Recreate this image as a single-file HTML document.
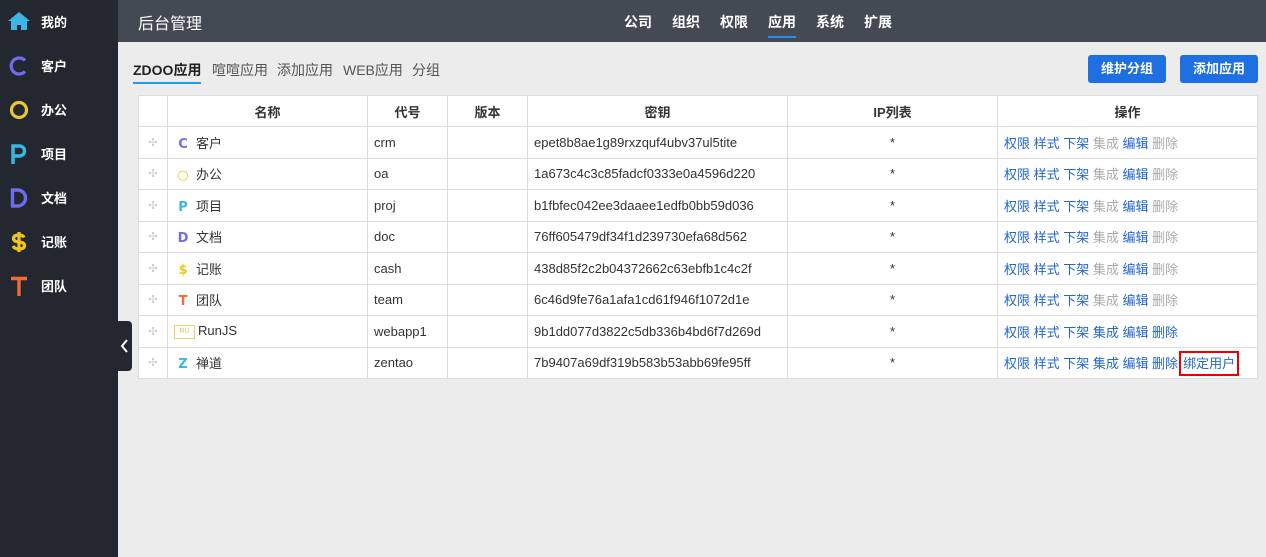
<!DOCTYPE html>
<html><head><meta charset="utf-8"><style>
*{margin:0;padding:0;box-sizing:border-box}
body{width:1266px;height:557px;background:#ececec;font-family:"Liberation Sans","Noto Sans CJK SC",sans-serif;font-size:13px;color:#333;position:relative;overflow:hidden}
#side{position:absolute;left:0;top:0;width:118px;height:557px;background:#23272f}
.si{position:absolute;left:0;height:44px;width:118px;color:#fff;font-weight:bold;font-size:13px}
.si svg{position:absolute;left:8px;top:11px}
.si .t{position:absolute;left:41px;top:12px}
#hd{position:absolute;left:118px;top:0;width:1148px;height:42px;background:#434a54;color:#fff}
#hd .ttl{position:absolute;left:20px;top:10px;font-size:16px}
#hd .nav{position:absolute;top:12px;font-weight:bold;font-size:14px}
#hd .act{border-bottom:2px solid #2a8ce6;padding-bottom:4px}
.tab{position:absolute;top:60px;font-size:14px;color:#555}
.btn{position:absolute;top:55px;height:28px;background:#1e6fe0;color:#fff;border-radius:3px;font-weight:bold;font-size:13px;line-height:28px;text-align:center}
table{position:absolute;left:138px;top:95px;border-collapse:collapse;background:#fff;table-layout:fixed}
td,th{border:1px solid #ddd;height:31.5px;padding:0 6px;white-space:nowrap;font-size:13px}
th{height:31px;font-weight:bold;text-align:center}
td.c{text-align:center}
td.d{color:#ccc;text-align:center;font-size:11px}
.b{color:#2366d1}.g{color:#aaa}
.ai{display:inline-block;width:14px;text-align:center;font-weight:bold;margin:0 6px 0 2px;font-family:"DejaVu Sans",sans-serif}
</style></head><body>
<div id="side">
<div class="si" style="top:0"><svg width="22" height="20" viewBox="0 0 22 20"><path d="M11 1L0 10h3v9h6v-5h4v5h6v-9h3z" fill="#3db5e6"/></svg><span class="t">我的</span></div>
<div class="si" style="top:44px"><svg width="22" height="22" viewBox="0 0 22 22"><path d="M17 5.5A8 8 0 1 0 17 16.5" fill="none" stroke="#6f6cf0" stroke-width="3.2"/></svg><span class="t">客户</span></div>
<div class="si" style="top:88px"><svg width="22" height="22" viewBox="0 0 22 22"><circle cx="11" cy="11" r="7.5" fill="none" stroke="#e8c830" stroke-width="3.2"/></svg><span class="t">办公</span></div>
<div class="si" style="top:132px"><svg width="22" height="22" viewBox="0 0 22 22"><path d="M5 21V3h6.5a5 5 0 0 1 0 10H5" fill="none" stroke="#3ab7e0" stroke-width="3.4"/></svg><span class="t">项目</span></div>
<div class="si" style="top:176px"><svg width="22" height="22" viewBox="0 0 22 22"><path d="M4.5 3h5a8 8 0 0 1 0 16h-5z" fill="none" stroke="#6e6cf0" stroke-width="3.4"/></svg><span class="t">文档</span></div>
<div class="si" style="top:220px"><svg width="22" height="22" viewBox="0 0 22 22"><path d="M16 6.5Q15 4 11 4Q5.5 4 5.5 7.5Q5.5 10.5 11 11Q16.5 11.5 16.5 14.5Q16.5 18 11 18Q6.5 18 5 15M11 1v20" fill="none" stroke="#f0c419" stroke-width="3.2"/></svg><span class="t">记账</span></div>
<div class="si" style="top:264px"><svg width="22" height="22" viewBox="0 0 22 22"><path d="M3 3.5h16M11 3.5V21" fill="none" stroke="#f06a3a" stroke-width="3.4"/></svg><span class="t">团队</span></div>
</div>
<div style="position:absolute;left:118px;top:321px;width:14px;height:50px;background:#23272f;border-radius:0 4px 4px 0"><svg width="14" height="50" viewBox="0 0 14 50"><path d="M9 19l-5 6 5 6" fill="none" stroke="#fff" stroke-width="2"/></svg></div>
<div id="hd"><span class="ttl">后台管理</span>
<span class="nav" style="left:506px">公司</span><span class="nav" style="left:554px">组织</span><span class="nav" style="left:602px">权限</span><span class="nav act" style="left:650px">应用</span><span class="nav" style="left:698px">系统</span><span class="nav" style="left:746px">扩展</span></div>
<span class="tab" style="left:133px;color:#222;font-weight:bold;border-bottom:2px solid #1a9cf0;padding-bottom:2px">ZDOO应用</span>
<span class="tab" style="left:212px">喧喧应用</span><span class="tab" style="left:277px">添加应用</span><span class="tab" style="left:343px">WEB应用</span><span class="tab" style="left:412px">分组</span>
<div class="btn" style="left:1088px;width:78px">维护分组</div>
<div class="btn" style="left:1180px;width:78px">添加应用</div>
<table>
<colgroup><col style="width:29px"><col style="width:200px"><col style="width:80px"><col style="width:80px"><col style="width:260px"><col style="width:210px"><col style="width:260px"></colgroup>
<tr><th></th><th>名称</th><th>代号</th><th>版本</th><th>密钥</th><th>IP列表</th><th>操作</th></tr>
<tr><td class="d">✣</td><td><span class="ai" style="color:#6f6cf0">C</span>客户</td><td>crm</td><td></td><td>epet8b8ae1g89rxzquf4ubv37ul5tite</td><td class="c">*</td><td><span class="b">权限 样式 下架</span> <span class="g">集成</span> <span class="b">编辑</span> <span class="g">删除</span></td></tr>
<tr><td class="d">✣</td><td><span class="ai" style="color:#e8c830">○</span>办公</td><td>oa</td><td></td><td>1a673c4c3c85fadcf0333e0a4596d220</td><td class="c">*</td><td><span class="b">权限 样式 下架</span> <span class="g">集成</span> <span class="b">编辑</span> <span class="g">删除</span></td></tr>
<tr><td class="d">✣</td><td><span class="ai" style="color:#3ab7e0">P</span>项目</td><td>proj</td><td></td><td>b1fbfec042ee3daaee1edfb0bb59d036</td><td class="c">*</td><td><span class="b">权限 样式 下架</span> <span class="g">集成</span> <span class="b">编辑</span> <span class="g">删除</span></td></tr>
<tr><td class="d">✣</td><td><span class="ai" style="color:#6e6cf0">D</span>文档</td><td>doc</td><td></td><td>76ff605479df34f1d239730efa68d562</td><td class="c">*</td><td><span class="b">权限 样式 下架</span> <span class="g">集成</span> <span class="b">编辑</span> <span class="g">删除</span></td></tr>
<tr><td class="d">✣</td><td><span class="ai" style="color:#f0c419">$</span>记账</td><td>cash</td><td></td><td>438d85f2c2b04372662c63ebfb1c4c2f</td><td class="c">*</td><td><span class="b">权限 样式 下架</span> <span class="g">集成</span> <span class="b">编辑</span> <span class="g">删除</span></td></tr>
<tr><td class="d">✣</td><td><span class="ai" style="color:#f06a3a">T</span>团队</td><td>team</td><td></td><td>6c46d9fe76a1afa1cd61f946f1072d1e</td><td class="c">*</td><td><span class="b">权限 样式 下架</span> <span class="g">集成</span> <span class="b">编辑</span> <span class="g">删除</span></td></tr>
<tr><td class="d">✣</td><td><span style="display:inline-block;width:21px;height:14px;border:1px solid #e8d070;color:#e0c060;font-size:7px;text-align:center;line-height:12px;margin-right:3px;vertical-align:middle">RU</span>RunJS</td><td>webapp1</td><td></td><td>9b1dd077d3822c5db336b4bd6f7d269d</td><td class="c">*</td><td class="b">权限 样式 下架 集成 编辑 删除</td></tr>
<tr><td class="d">✣</td><td><span class="ai" style="color:#3ab7e0">Z</span>禅道</td><td>zentao</td><td></td><td>7b9407a69df319b583b53abb69fe95ff</td><td class="c">*</td><td class="b">权限 样式 下架 集成 编辑 删除<span style="border:2px solid #e00;padding:3px 2px;margin-left:1px">绑定用户</span></td></tr>
</table>
</body></html>
